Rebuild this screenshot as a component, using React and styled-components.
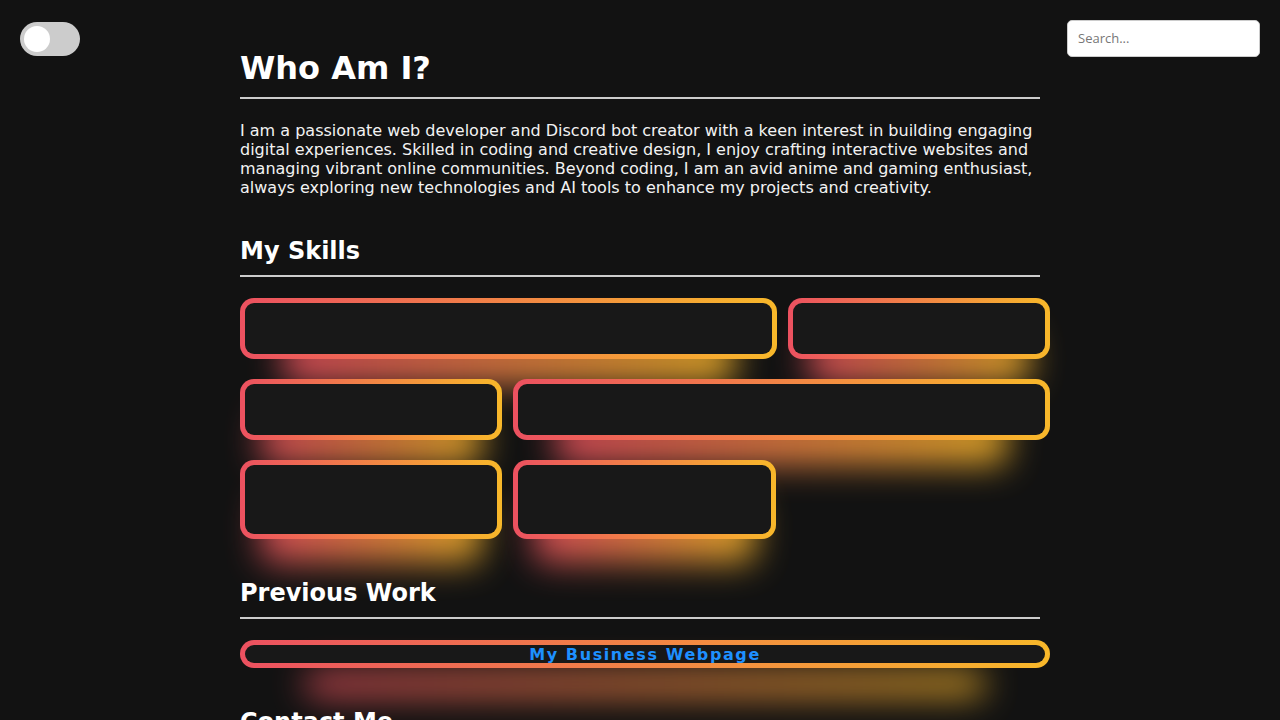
import React from 'react';
import styled, { createGlobalStyle } from 'styled-components';

const GlobalStyle = createGlobalStyle`
	html, body {
		margin: 0;
		padding: 0;
		background: #121212;
		color: #ffffff;
		font-family: 'DejaVu Sans', sans-serif;
		overflow: hidden;
	}
`;

const gradient = 'linear-gradient(90deg, #ec5160, #f8b82a)';

const Toggle = styled.div`
	position: fixed;
	top: 22px;
	left: 20px;
	width: 60px;
	height: 34px;
	border-radius: 34px;
	background: #cccccc;
	z-index: 5;
	&::before {
		content: '';
		position: absolute;
		top: 4px;
		left: 4px;
		width: 26px;
		height: 26px;
		border-radius: 50%;
		background: #ffffff;
	}
`;

const Search = styled.input`
	position: fixed;
	top: 20px;
	right: 20px;
	width: 193px;
	height: 37px;
	box-sizing: border-box;
	padding: 0 10px 2px;
	border: 1px solid #cccccc;
	border-radius: 5px;
	background: #ffffff;
	font-family: 'Open Sans', sans-serif;
	font-size: 13px;
	z-index: 5;
	outline: none;
	&::placeholder {
		color: #777777;
	}
`;

const Main = styled.main`
	width: 800px;
	margin: 0 auto;
	padding-top: 50px;
	isolation: isolate;
`;

const Title = styled.h1`
	margin: 0;
	font-size: 32px;
	line-height: 37px;
	font-weight: bold;
	padding-bottom: 10px;
	border-bottom: 2px solid #cccccc;
`;

const Heading = styled.h2`
	margin: 40px 0 0;
	font-size: 24px;
	line-height: 28px;
	font-weight: bold;
	padding-bottom: 10px;
	border-bottom: 2px solid #cccccc;
`;

const About = styled.p`
	margin: 22px 0 0;
	font-size: 16px;
	line-height: 19px;
	color: #f2f2f2;
`;

const Skills = styled.div`
	width: 812px;
	margin-top: 21px;
	display: flex;
	flex-wrap: wrap;
	column-gap: 11px;
	row-gap: 20px;
`;

const Glow = styled.div`
	position: relative;
	box-sizing: border-box;
	border: 5px solid transparent;
	background: linear-gradient(#181818, #181818) padding-box, ${gradient} border-box;
	&::before {
		content: '';
		position: absolute;
		inset: -5px;
		z-index: -1;
		background: ${gradient};
		border-radius: inherit;
		filter: blur(20px);
		opacity: 0.85;
		transform: translateY(30px) scale(0.84);
	}
`;

const SkillCard = styled(Glow)`
	width: ${(p) => p.$w}px;
	height: ${(p) => p.$h}px;
	border-radius: 14px;
`;

const WorkButton = styled(Glow)`
	margin-top: 21px;
	width: 810px;
	height: 28px;
	border-radius: 14px;
	display: flex;
	align-items: center;
	justify-content: center;
	color: #1e90ff;
	font-weight: bold;
	font-size: 16px;
	letter-spacing: 1.6px;
`;

const skills = [
	{ w: 537, h: 61 },
	{ w: 262, h: 61 },
	{ w: 262, h: 61 },
	{ w: 537, h: 61 },
	{ w: 262, h: 79 },
	{ w: 263, h: 79 },
];

export default function App() {
	return (
		<>
			<GlobalStyle />
			<Toggle />
			<Search placeholder="Search..." />
			<Main>
				<Title>Who Am I?</Title>
				<About>
					I am a passionate web developer and Discord bot creator with a keen interest in building engaging
					digital experiences. Skilled in coding and creative design, I enjoy crafting interactive websites and
					managing vibrant online communities. Beyond coding, I am an avid anime and gaming enthusiast,
					always exploring new technologies and AI tools to enhance my projects and creativity.
				</About>
				<Heading>My Skills</Heading>
				<Skills>
					{skills.map((s, i) => (
						<SkillCard key={i} $w={s.w} $h={s.h} />
					))}
				</Skills>
				<Heading>Previous Work</Heading>
				<WorkButton>My Business Webpage</WorkButton>
				<Heading>Contact Me</Heading>
			</Main>
		</>
	);
}
